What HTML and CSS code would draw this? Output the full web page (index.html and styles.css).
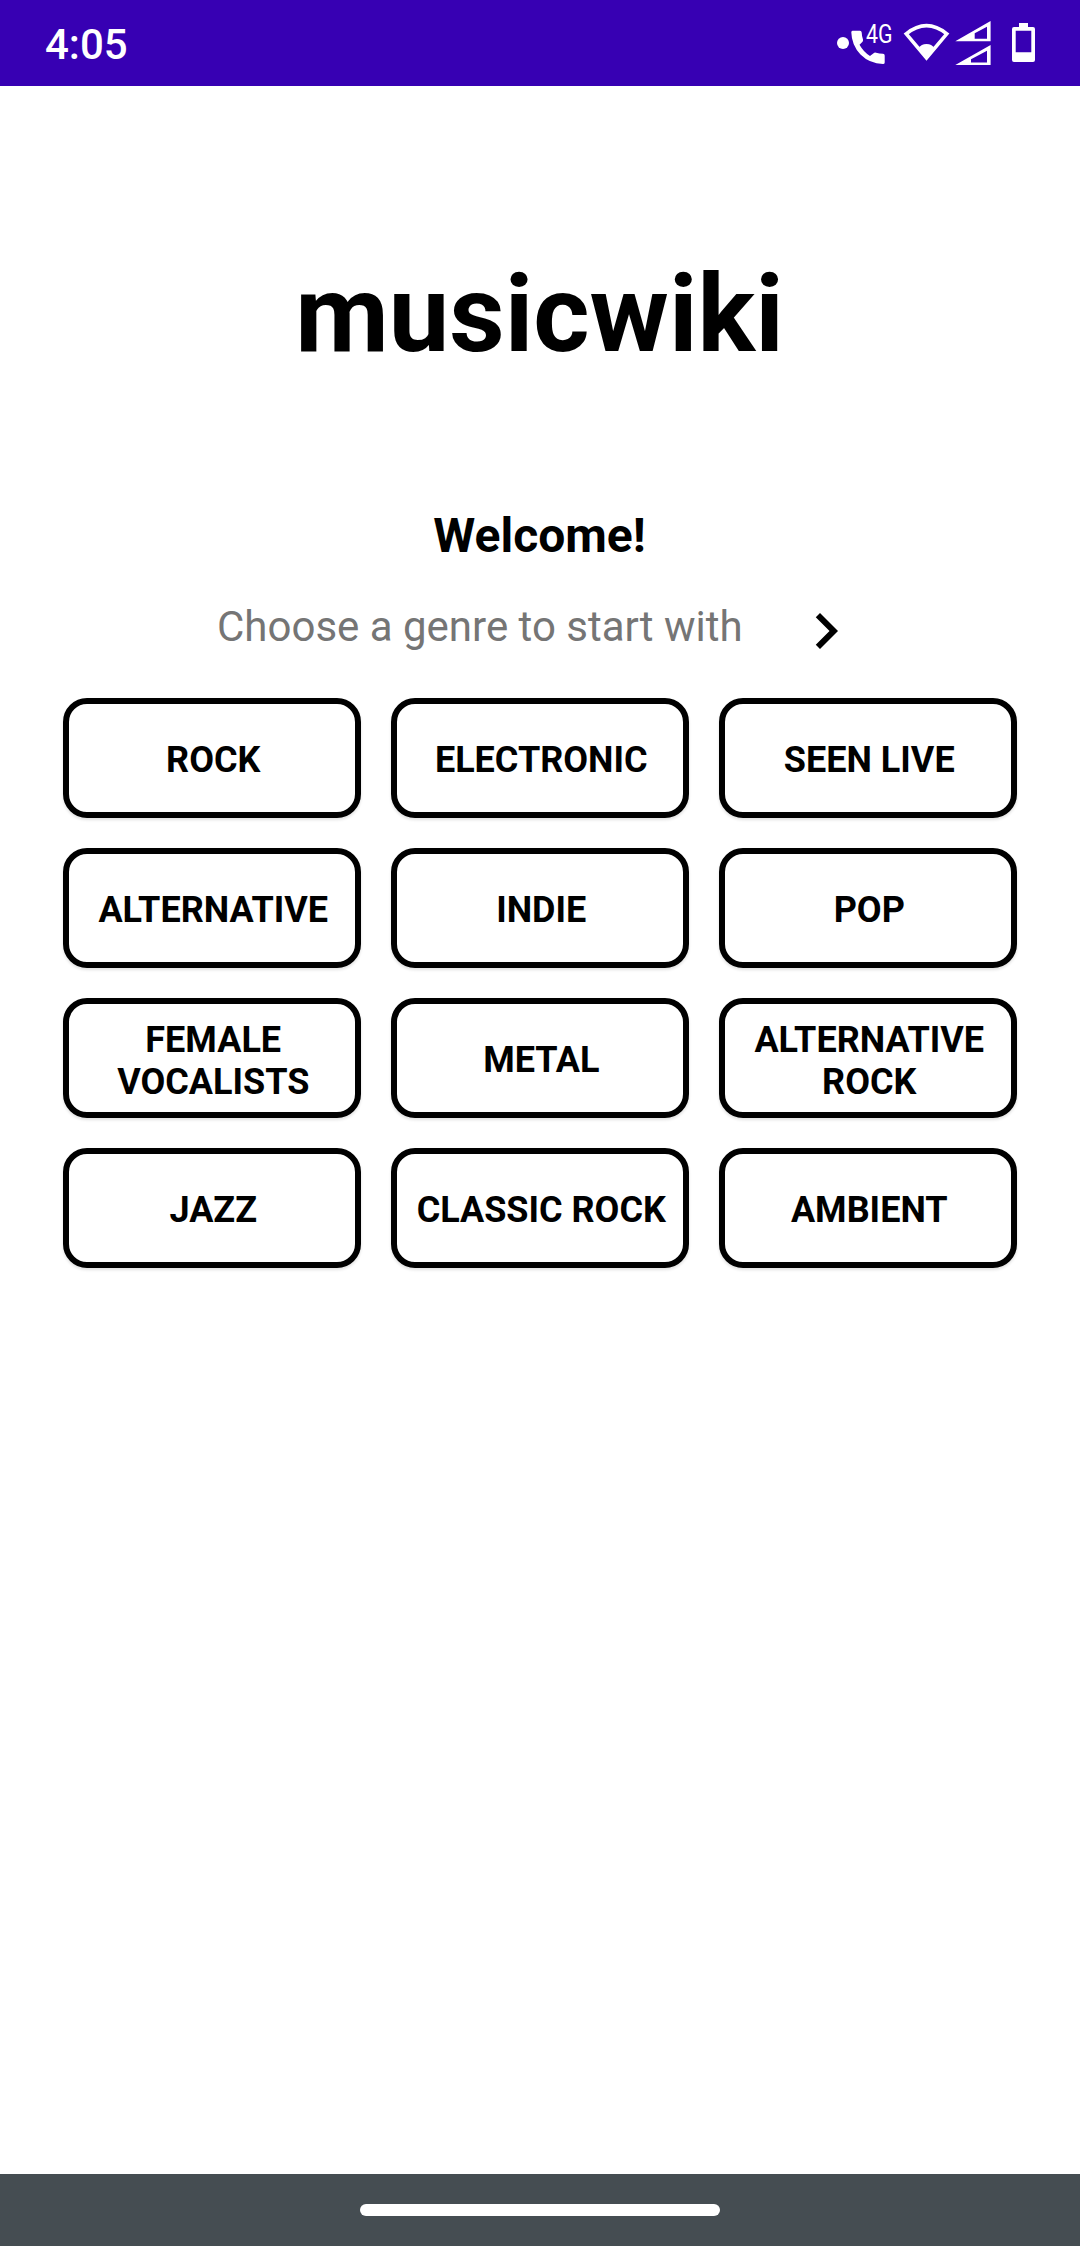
FILE: index.html
```html
<!DOCTYPE html>
<html lang="en">
<head>
<meta charset="utf-8">
<title>musicwiki</title>
<link rel="stylesheet" href="styles.css">
</head>
<body>
<div class="screen">
  <header class="status-bar">
    <span class="clock">4:05</span>
    <div class="status-icons">
      <svg class="icon-call" viewBox="836 10 64 60" width="64" height="60">
        <circle cx="843" cy="43" r="6" fill="#fff"/>
        <path fill="#fff" d="M852.500 30.700H860Q861.500 30.700 861.700 32.500Q861.800 36 863 39.500Q863.300 41 862.300 42L859.500 44.800Q863.500 52 870 56L873.600 53.200Q874.600 52.300 876 52.700Q879.500 53.600 883 53.700Q884.700 53.900 884.700 55.500V62.400Q884.700 64 883 64Q869.500 63.600 860.500 54.500Q851.600 45 851.300 32.200Q851.300 30.700 852.500 30.700Z"/>
        <text class="network" x="866" y="43" textLength="26.500" lengthAdjust="spacingAndGlyphs">4G</text>
      </svg>
      <svg class="icon-wifi" viewBox="902 10 50 60" width="50" height="60">
        <path fill="none" stroke="#fff" stroke-width="3.600" d="M906.200 33.800Q926.500 17.400 946.800 33.800L926.500 58Z"/>
        <path fill="#fff" d="M919 48Q921 44 926.500 44Q932 44 934 48L926.500 60Z"/>
      </svg>
      <svg class="icon-signal" viewBox="954 10 38 60" width="38" height="60">
        <path fill="#fff" fill-rule="evenodd" d="M955.300 41.200L990.600 21V41.200ZM974.700 33.200V38.800H987V26.800Z"/>
        <path fill="#fff" fill-rule="evenodd" d="M955.300 65L990.600 45V65ZM971 59.300V62.600H987V50.800Z"/>
      </svg>
      <svg class="icon-battery" viewBox="1010 10 26 60" width="26" height="60">
        <path fill="#fff" fill-rule="evenodd" d="M1019 23H1028V27H1033Q1035 27 1035 29V60Q1035 62 1033 62H1014Q1012 62 1012 60V29Q1012 27 1014 27H1019ZM1015.700 30.700V52.300H1031.300V30.700Z"/>
      </svg>
    </div>
  </header>

  <main class="content">
    <h1 class="title">musicwiki</h1>
    <h2 class="welcome">Welcome!</h2>
    <div class="prompt">
      <span class="prompt-text">Choose a genre to start with</span>
      <svg class="chevron" viewBox="0 0 24 24" width="72" height="72"><path d="M10 6L8.590 7.410 13.170 12l-4.580 4.590L10 18l6-6z"/></svg>
    </div>
    <div class="genres">
      <button class="genre">Rock</button>
      <button class="genre">Electronic</button>
      <button class="genre">Seen live</button>
      <button class="genre">Alternative</button>
      <button class="genre">Indie</button>
      <button class="genre">Pop</button>
      <button class="genre genre-wrapped">Female vocalists</button>
      <button class="genre">Metal</button>
      <button class="genre genre-wrapped">Alternative rock</button>
      <button class="genre">Jazz</button>
      <button class="genre">Classic rock</button>
      <button class="genre">Ambient</button>
    </div>
  </main>

  <footer class="nav-bar"><div class="nav-handle"></div></footer>
</div>
</body>
</html>
```
FILE: styles.css
```css
* { box-sizing: border-box; }
body { margin: 0; background: #fff; font-family: Roboto, sans-serif; color: #000; }
.screen { display: flex; flex-direction: column; width: 1080px; height: 2246px; }

.status-bar { display: flex; justify-content: space-between; height: 86px; padding: 0 44px 0 45px; background: #3700b3; color: #fff; }
.clock { font-size: 42px; font-weight: 500; line-height: 49px; padding-top: 20px; }
.status-icons { display: flex; padding-top: 10px; }
.icon-wifi { margin-left: 2px; }
.icon-signal { margin-left: 2px; }
.icon-battery { margin-left: 18px; }
.network { font-size: 26px; fill: #fff; }

.content { flex: 1; padding: 165px 63px 0; }
.title { margin: 0; padding-right: 1px; font-size: 108px; line-height: 126px; font-weight: 700; text-align: center; }
.welcome { margin: 131px 0 0; padding-right: 1px; font-size: 48px; line-height: 56px; font-weight: 700; text-align: center; }
.prompt { display: flex; align-items: center; justify-content: space-between; height: 72px; margin-top: 31px; padding: 0 155px 0 154px; }
.prompt-text { padding-bottom: 9px; font-size: 42px; line-height: 49px; color: #757575; white-space: nowrap; }
.chevron { flex: none; fill: #000; }

.genres { display: grid; grid-template-columns: repeat(3, 298px); grid-auto-rows: 120px; gap: 30px; margin-top: 31px; }
.genre { display: flex; align-items: center; justify-content: center; margin: 0; padding: 4px 9.5px 0 12px; border: 6px solid #000; border-radius: 24px; background: #fff; box-shadow: 0 2px 3px rgba(0, 0, 0, .12); font: 700 36px/42px Roboto, sans-serif; color: #000; text-align: center; text-transform: uppercase; }
.genre-wrapped { padding-top: 5px; }

.nav-bar { display: flex; align-items: center; justify-content: center; height: 72px; background: #454d52; }
.nav-handle { width: 360px; height: 12px; border-radius: 6px; background: #fff; }
```
